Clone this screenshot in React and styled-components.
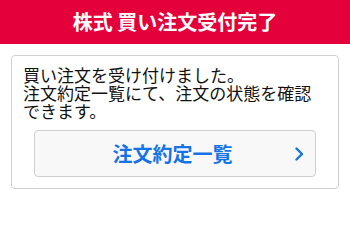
import React from "react";
import styled, { createGlobalStyle } from "styled-components";

const Global = createGlobalStyle`
  html, body { margin: 0; padding: 0; background: #fff; }
  body { font-family: "Noto Sans CJK JP", "Noto Sans", sans-serif; }
`;

const Header = styled.header`
  height: 44px;
  background: #e4003b;
  display: flex;
  align-items: center;
  justify-content: center;
`;

const Title = styled.h1`
  margin: 0;
  color: #fff;
  font-size: 20px;
  font-weight: 700;
  line-height: 1;
`;

const Card = styled.section`
  margin: 11px;
  border: 1px solid #d0d0d0;
  border-radius: 4px;
  padding: 10px 11px 11px;
  display: flex;
  flex-direction: column;
  gap: 10px;
`;

const Message = styled.p`
  margin: 0;
  font-size: 17px;
  line-height: 18px;
  color: #111;
`;

const LinkButton = styled.button`
  margin: 0 11px;
  height: 47px;
  border: 1px solid #cfcfcf;
  border-radius: 4px;
  background: #f8f8f8;
  display: flex;
  align-items: center;
  justify-content: center;
  position: relative;
  font-family: inherit;
  padding: 0;
  cursor: pointer;
`;

const ButtonLabel = styled.span`
  color: #1673e6;
  font-size: 20px;
  font-weight: 700;
  line-height: 1;
  margin-left: -5px;
`;

const Chevron = styled.svg`
  position: absolute;
  right: 10px;
  top: 50%;
  transform: translateY(-50%);
`;

export default function App() {
  return (
    <>
      <Global />
      <Header>
        <Title>株式 買い注文受付完了</Title>
      </Header>
      <Card>
        <Message>
          買い注文を受け付けました。
          <br />
          注文約定一覧にて、注文の状態を確認
          <br />
          できます。
        </Message>
        <LinkButton>
          <ButtonLabel>注文約定一覧</ButtonLabel>
          <Chevron width="11" height="14" viewBox="0 0 11 14">
            <path d="M2.5 1.5 L8 7 L2.5 12.5" fill="none" stroke="#1673e6" strokeWidth="2.4" strokeLinecap="round" strokeLinejoin="round" />
          </Chevron>
        </LinkButton>
      </Card>
    </>
  );
}
